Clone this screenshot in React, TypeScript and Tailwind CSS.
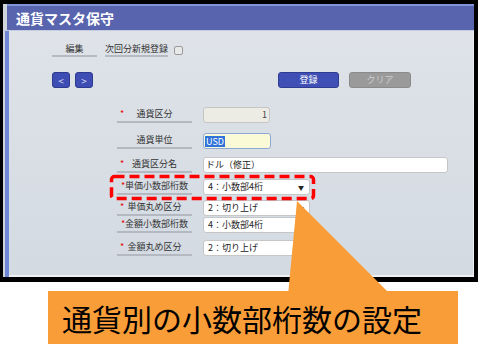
import type { ReactNode } from "react";

type RowProps = {
  label: string;
  star?: "side" | "inline";
  className: string;
  children: ReactNode;
};

// one line of the form: underlined label cell + field
function Row({ label, star, className, children }: RowProps) {
  return (
    <div className={`flex items-center ml-[108px] ${className}`}>
      <div className="relative w-[75px] h-[16px] border-b-2 border-[#b4b8c0] flex items-center justify-center text-[9px] text-[#333]">
        {star === "side" && <span className="absolute left-[3px] text-[#e60000]">*</span>}
        {star === "inline" && <span className="text-[#e60000]">*</span>}
        <span>{label}</span>
      </div>
      <div className="ml-[11px]">{children}</div>
    </div>
  );
}

function Select({ value }: { value: string }) {
  return (
    <div className="w-[107px] h-[16px] rounded-[3px] border border-[#c6c6c6] bg-white flex items-center justify-between pl-[4px] pr-[5px] text-[9px] text-[#222]">
      <span>{value}</span>
      <span className="text-[6px]">▼</span>
    </div>
  );
}

export default function App() {
  return (
    <div className="relative w-[479px] h-[344px] bg-white overflow-hidden font-['Noto_Sans_CJK_JP','Noto_Sans',sans-serif]">
      {/* screenshot frame */}
      <div className="w-[478px] h-[282px] border-t-4 border-l-[3px] border-r-4 border-b-[5px] border-black flex flex-col bg-[#cfd3da]">
        <div className="flex">
          <div className="w-[4px] bg-[#cfd3da]" />
          <div className="flex-1 h-[26px] bg-[#5864ae] border-t-2 border-[#7f95d8] flex items-center pl-[9px] text-white text-[14px] font-bold">
            通貨マスタ保守
          </div>
        </div>
        <div className="h-px bg-[#c5cbe0]" />
        <div className="flex flex-1">
          <div className="w-[2px] bg-[#d0d3da]" />
          <div className="w-[4px] bg-[#6f88d6]" />
          <div className="flex-1 flex flex-col bg-gradient-to-b from-[#dfe3e8] to-[#d3dae2] border-r border-b-2 border-[#eef0f3]">
            {/* top line */}
            <div className="flex items-end mt-[11px] ml-[43px] h-[15px] text-[9px] text-[#333]">
              <div className="w-[45px] h-[15px] border-b-2 border-[#b6bac2] text-center leading-[13px]">編集</div>
              <div className="ml-[8px] w-[63px] h-[15px] border-b-2 border-[#b6bac2] text-center leading-[13px]">次回分新規登録</div>
              <div className="ml-[6px] mb-[2px] w-[9px] h-[9px] rounded-[2px] border border-[#9a9a9a] bg-[#e8e8e8]" />
            </div>

            {/* buttons */}
            <div className="flex items-center mt-[15px] ml-[43px] h-[16px]">
              <div className="w-[18px] h-[16px] rounded-[3px] bg-[#3d4db3] border border-[#2d3a8f] text-[#d8dcf5] text-[10px] flex items-center justify-center">&lt;</div>
              <div className="ml-[5px] w-[18px] h-[16px] rounded-[3px] bg-[#3d4db3] border border-[#2d3a8f] text-[#d8dcf5] text-[10px] flex items-center justify-center">&gt;</div>
              <div className="ml-[185px] w-[61px] h-[16px] rounded-[3px] bg-[#3f4fb6] border border-[#2f3c92] text-white text-[9px] flex items-center justify-center">登録</div>
              <div className="ml-[10px] w-[62px] h-[16px] rounded-[3px] bg-[#9a9a9a] border border-[#8a8a8a] text-[#cdcdcd] text-[9px] flex items-center justify-center">クリア</div>
            </div>

            {/* form */}
            <Row label="通貨区分" star="side" className="mt-[19px]">
              <div className="w-[67px] h-[16px] rounded-[3px] border border-[#c6c6c6] bg-[#ecebe4] flex items-center justify-end pr-[2px] text-[9px] text-[#444]">1</div>
            </Row>
            <Row label="通貨単位" className="mt-[10px]">
              <div className="w-[68px] h-[16px] rounded-[3px] border border-[#8ea8d8] bg-[#fafad6] flex items-center pl-px text-[9px]">
                <span className="bg-[#3073d9] text-white px-px leading-[11px]">USD</span>
              </div>
            </Row>
            <Row label="通貨区分名" star="side" className="mt-[8px]">
              <div className="w-[245px] h-[16px] rounded-[3px] border border-[#c6c6c6] bg-white flex items-center pl-[2px] text-[9px] text-[#222]">ドル（修正）</div>
            </Row>
            <Row label="単価小数部桁数" star="inline" className="mt-[6px]">
              <Select value="4：小数部4桁" />
            </Row>
            <Row label="単価丸め区分" star="side" className="mt-[5px]">
              <Select value="2：切り上げ" />
            </Row>
            <Row label="金額小数部桁数" star="inline" className="mt-px">
              <Select value="4：小数部4桁" />
            </Row>
            <Row label="金額丸め区分" star="side" className="mt-[7px]">
              <Select value="2：切り上げ" />
            </Row>
          </div>
        </div>
      </div>

      {/* callout */}
      <div className="mt-[9px] ml-[48px] w-[410px] h-[53px] bg-[#f99d38] flex items-center pl-[14px] text-[30px] leading-none text-black">
        通貨別の小数部桁数の設定
      </div>

      <svg className="absolute inset-0 pointer-events-none" width="479" height="344" viewBox="0 0 479 344">
        <rect x="111.5" y="176.5" width="202" height="22" rx="3" fill="none" stroke="#ff0000" strokeWidth="3.5" strokeDasharray="10 5" />
        <polygon points="297,201 288,295 391,295" fill="#f99d38" />
      </svg>
    </div>
  );
}
